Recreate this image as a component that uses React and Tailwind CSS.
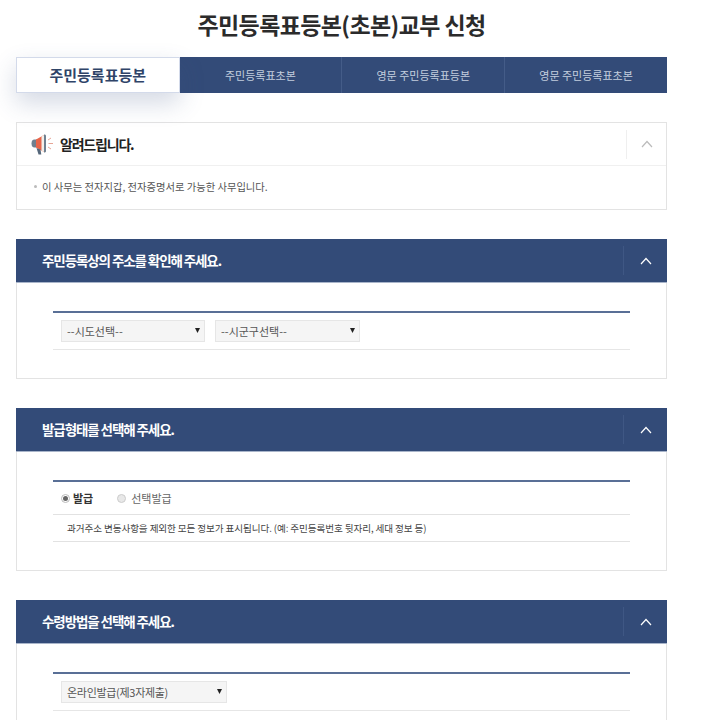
const font = { fontFamily: "'Noto Sans CJK KR', 'Noto Sans', sans-serif" };

const tabs = ['주민등록표초본', '영문 주민등록표등본', '영문 주민등록표초본'];

function Chevron({ className }) {
  return (
    <svg className={className} width="12" height="8" viewBox="0 0 12 8" fill="none" stroke="currentColor" strokeWidth="1.2">
      <path d="M1 7l5-5.5L11 7" />
    </svg>
  );
}

function Megaphone() {
  return (
    <svg width="23" height="22" viewBox="0 0 23 22" fill="none">
      <path d="M3.500 6.500H6v8H3.500a3 4 0 0 1 0-8z" fill="#6f8090" />
      <path d="M5 6.500l8-4.500v17l-8-4.500z" fill="#e8654a" />
      <path d="M10.500 3.400L13 2v17l-2.500-1.400z" fill="#f3efe9" />
      <path d="M13 1.500c1 0 2 .5 2 1v16c0 .5-1 1-2 1z" fill="#6f8090" />
      <path d="M5.500 15l4 1.500.8 5H7.500z" fill="#55677a" />
      <path d="M17 7l3-2M17.500 10.500H22M17 14l3 2" stroke="#e6a596" strokeWidth="1" />
    </svg>
  );
}

function Section({ title, children, bodyClass }) {
  return (
    <section className={`mb-[29px] border border-[#e3e3e3] border-t-0 ${bodyClass}`}>
      <div className="-mx-px flex h-[44px] items-center justify-between border-b border-[#a9b5ca] bg-[#334b78] pl-[26px] text-white">
        <h2 className="text-[13.500px] font-bold tracking-[-1.100px]">{title}</h2>
        <div className="flex h-[29px] w-[44px] items-center justify-center border-l border-[#3f5784]">
          <Chevron className="text-white" />
        </div>
      </div>
      {children}
    </section>
  );
}

function Picker({ width, label, track = '' }) {
  return (
    <div className={`relative h-[22px] ${width}`}>
      <select
        defaultValue={label}
        className={`block h-full w-full appearance-none rounded-none border border-[#e6e6e6] bg-[#f5f5f5] pl-[5px] text-[11px] text-[#555] ${track}`}
      >
        <option>{label}</option>
      </select>
      <svg className="pointer-events-none absolute right-[5px] top-[8px]" width="5" height="5" viewBox="0 0 5 5">
        <path d="M0 0h5L2.500 5z" fill="#222" />
      </svg>
    </div>
  );
}

export default function App() {
  return (
    <div className="h-[720px] overflow-hidden bg-white" style={font}>
      <div className="ml-[16px] w-[651px]">
        <h1 className="flex h-[57px] items-center justify-center pb-[9px] text-[23px] font-bold tracking-[-0.6px] text-[#2b2b2b]">
          주민등록표등본(초본)교부 신청
        </h1>

        <div className="flex h-[36px] bg-[#334b78]">
          <div className="relative flex w-[163.500px] items-center justify-center border border-[#d3daea] bg-white text-[15px] font-bold text-[#2f4468] shadow-[0_10px_24px_rgba(60,80,130,0.22)]">
            주민등록표등본
          </div>
          {tabs.map((t, i) => (
            <div
              key={t}
              className={`flex flex-1 items-center justify-center text-[11px] text-[#c3cede] ${i > 0 ? 'border-l border-[#445c88]' : ''}`}
            >
              {t}
            </div>
          ))}
        </div>

        <section className="mb-[29px] mt-[29px] h-[88px] border border-[#e3e3e3]">
          <div className="flex h-[43px] items-center justify-between border-b border-[#f0f0f0] pl-[14px]">
            <div className="flex items-center gap-[6px]">
              <Megaphone />
              <span className="text-[14px] font-bold tracking-[-1.200px] text-[#222]">알려드립니다.</span>
            </div>
            <div className="flex h-[29px] w-[40px] items-center justify-center border-l border-[#efefef]">
              <Chevron className="text-[#bbb]" />
            </div>
          </div>
          <p className="flex items-center gap-[5px] pl-[17px] pt-[13px] text-[10.300px] text-[#555]">
            <span className="h-[3px] w-[3px] rounded-full bg-[#bbb]" />이 사무는 전자지갑, 전자증명서로 가능한 사무입니다.
          </p>
        </section>

        <Section title="주민등록상의 주소를 확인해 주세요." bodyClass="h-[140px]">
          <div className="mx-[36px] mt-[28px] border-t-2 border-b border-t-[#596f96] border-b-[#e6e6e6]">
            <div className="flex h-[36px] items-center gap-[10px] pl-[8px]">
              <Picker width="w-[144px]" label="--시도선택--" />
              <Picker width="w-[145px]" label="--시군구선택--" />
            </div>
          </div>
        </Section>

        <Section title="발급형태를 선택해 주세요." bodyClass="h-[163px]">
          <div className="mx-[36px] mt-[28px] border-t-2 border-t-[#596f96]">
            <div className="flex h-[33px] items-center border-b border-[#e2e2e2] pl-[8px] text-[11px]">
              <span className="flex h-[9px] w-[9px] items-center justify-center rounded-full border border-[#bbb] bg-white">
                <span className="h-[5px] w-[5px] rounded-full bg-[#666]" />
              </span>
              <span className="ml-[3px] font-bold text-[#333]">발급</span>
              <span className="ml-[24px] h-[9px] w-[9px] rounded-full border border-[#ccc] bg-[#e8e8e8]" />
              <span className="ml-[5px] text-[#666]">선택발급</span>
            </div>
            <p className="flex h-[27px] items-center border-b border-[#e2e2e2] pl-[14px] text-[9.600px] tracking-[-0.1px] text-[#444]">
              과거주소 변동사항을 제외한 모든 정보가 표시됩니다. (예: 주민등록번호 뒷자리, 세대 정보 등)
            </p>
          </div>
        </Section>

        <Section title="수령방법을 선택해 주세요." bodyClass="h-[200px]">
          <div className="mx-[36px] mt-[28px] border-t-2 border-b border-t-[#596f96] border-b-[#e6e6e6]">
            <div className="flex h-[36px] items-center pl-[8px]">
              <Picker width="w-[166px]" label="온라인발급(제3자제출)" track="tracking-[-0.3px]" />
            </div>
          </div>
        </Section>
      </div>
    </div>
  );
}
